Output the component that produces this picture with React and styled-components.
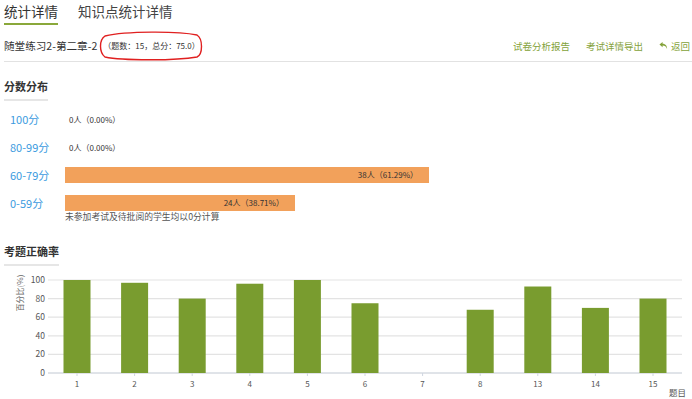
import React from "react";
import styled, { createGlobalStyle } from "styled-components";

const Global = createGlobalStyle`
  html, body { margin: 0; padding: 0; background: #fff; }
  body { font-family: "Noto Sans CJK SC", "Microsoft YaHei", "Noto Sans", sans-serif; color: #333; }
  * { box-sizing: border-box; }
`;

const Page = styled.div`
  width: 692px;
  height: 399px;
  overflow: hidden;
  position: relative;
`;

const Tabs = styled.div`
  display: flex;
  align-items: flex-end;
  height: 25px;
  padding-left: 4px;
  gap: 20px;
`;

const Tab = styled.div`
  font-size: 13.5px;
  line-height: 20px;
  height: 25px;
  padding-top: 1px;
  color: ${(p) => (p.$active ? "#333" : "#444")};
  border-bottom: 2px solid ${(p) => (p.$active ? "#8aa83a" : "transparent")};
`;

const Header = styled.div`
  display: flex;
  align-items: center;
  justify-content: space-between;
  height: 37px;
  margin-left: 4px;
  padding-top: 5px;
  border-bottom: 1px solid #e2e2e2;
`;

const Title = styled.div`
  display: flex;
  align-items: center;
  font-size: 10.6px;
  color: #333;
`;

const Count = styled.span`
  position: relative;
  display: inline-block;
  line-height: 12px;
  margin-left: 6px;
  font-size: 8px;
  color: #333;
`;

const Ring = styled.svg`
  position: absolute;
  left: -5px;
  top: -9px;
  pointer-events: none;
`;

const Links = styled.div`
  display: flex;
  align-items: center;
  gap: 16px;
  font-size: 9.5px;
  color: #84a23a;
  padding-right: 2px;
`;

const Link = styled.span`
  display: flex;
  align-items: center;
  gap: 3px;
`;

const Section = styled.div`
  padding-left: 4px;
`;

const SectionTitle = styled.div`
  display: inline-block;
  font-size: 11px;
  font-weight: bold;
  color: #333;
  line-height: 14px;
  padding-bottom: 6px;
  margin-top: ${(p) => p.$top}px;
  border-bottom: 2px solid #e6e6e6;
`;

const Rows = styled.div`
  margin-top: 4px;
  display: flex;
  flex-direction: column;
`;

const Row = styled.div`
  display: flex;
  align-items: center;
  height: 28px;
`;

const RangeLabel = styled.div`
  width: 61px;
  padding-left: 6px;
  font-size: 11px;
  color: #3c9be0;
`;

const Track = styled.div`
  width: 594px;
  position: relative;
`;

const Bar = styled.div`
  height: 16px;
  background: #f2a15b;
  font-size: 8px;
  line-height: 16px;
  text-align: right;
  padding-right: 11px;
  color: #333;
  white-space: nowrap;
`;

const ZeroText = styled.div`
  font-size: 8px;
  padding-left: 4px;
  color: #333;
`;

const Note = styled.div`
  position: absolute;
  left: 0;
  top: 16px;
  font-size: 8.8px;
  line-height: 11px;
  color: #555;
  white-space: nowrap;
`;

const ChartBox = styled.svg`
  display: block;
  margin-top: 2px;
`;

const rows = [
  { label: "100分", n: 0, pct: "0.00" },
  { label: "80-99分", n: 0, pct: "0.00" },
  { label: "60-79分", n: 38, pct: "61.29" },
  { label: "0-59分", n: 24, pct: "38.71", note: true },
];

const qs = [
  ["1", 100], ["2", 97], ["3", 80], ["4", 96], ["5", 100], ["6", 75],
  ["7", 0], ["8", 68], ["13", 93], ["14", 70], ["15", 80],
];

function Chart() {
  const top = 12;
  const bottom = 105;
  const h = bottom - top;
  const x0 = 48;
  const step = 57.6;
  const first = 77;
  const ticks = [100, 80, 60, 40, 20, 0];
  return (
    <ChartBox width="692" height="133" viewBox="0 0 692 133">
      <text x="21" y="25" fontSize="8" fill="#666" textAnchor="middle" dominantBaseline="middle"
        transform="rotate(-90 21 25)">百分比(%)</text>
      {ticks.map((t) => {
        const y = bottom - (t / 100) * h;
        return (
          <g key={t}>
            <line x1={x0} x2="682" y1={y} y2={y} stroke="#e3e3e3" strokeWidth="1.2" />
            <text x="45" y={y + 3} fontSize="8.5" fill="#555" textAnchor="end">{t}</text>
          </g>
        );
      })}
      <line x1={x0} x2="682" y1={bottom} y2={bottom} stroke="#cfd6e0" strokeWidth="1" />
      {qs.map(([k, v], i) => {
        const cx = first + i * step;
        const bh = (v / 100) * h;
        return (
          <g key={k}>
            {v > 0 && <rect x={cx - 13.5} y={bottom - bh} width="27" height={bh} fill="#799c2f" />}
            <line x1={cx} x2={cx} y1={bottom} y2={bottom + 3} stroke="#cfd6e0" />
            <text x={cx} y={bottom + 14} fontSize="8" fill="#555" textAnchor="middle">{k}</text>
          </g>
        );
      })}
      <text x="686" y="128" fontSize="8.5" fill="#555" textAnchor="end">题目</text>
    </ChartBox>
  );
}

export default function App() {
  return (
    <Page>
      <Global />
      <Tabs>
        <Tab $active>统计详情</Tab>
        <Tab>知识点统计详情</Tab>
      </Tabs>
      <Header>
        <Title>
          随堂练习2-第二章-2
          <Count>
            （题数：15，总分：75.0）
            <Ring width="106" height="30" viewBox="0 0 106 30">
              <path d="M7 5 C28 0, 80 0, 99 4 C105 8, 105 23, 99 26 C76 30, 24 29.5, 7 26 C1 21, 1 9, 7 5 Z"
                fill="none" stroke="#e02020" strokeWidth="1.4" />
            </Ring>
          </Count>
        </Title>
        <Links>
          <Link>试卷分析报告</Link>
          <Link>考试详情导出</Link>
          <Link>
            <svg width="9" height="9" viewBox="0 0 10 10">
              <path d="M4 1 L0.5 4 L4 7 L4 5 C6.5 5 8 6 9 9 C9 5.5 7.5 3 4 3 Z" fill="#84a23a" />
            </svg>
            返回
          </Link>
        </Links>
      </Header>
      <Section>
        <SectionTitle $top={17}>分数分布</SectionTitle>
        <Rows>
          {rows.map((r) => (
            <Row key={r.label}>
              <RangeLabel>{r.label}</RangeLabel>
              <Track>
                {r.n > 0 ? (
                  <Bar style={{ width: `${(r.n / 62) * 100}%` }}>{r.n}人（{r.pct}%）</Bar>
                ) : (
                  <ZeroText>{r.n}人（{r.pct}%）</ZeroText>
                )}
                {r.note && <Note>未参加考试及待批阅的学生均以0分计算</Note>}
              </Track>
            </Row>
          ))}
        </Rows>
        <SectionTitle $top={27}>考题正确率</SectionTitle>
      </Section>
      <Chart />
    </Page>
  );
}
